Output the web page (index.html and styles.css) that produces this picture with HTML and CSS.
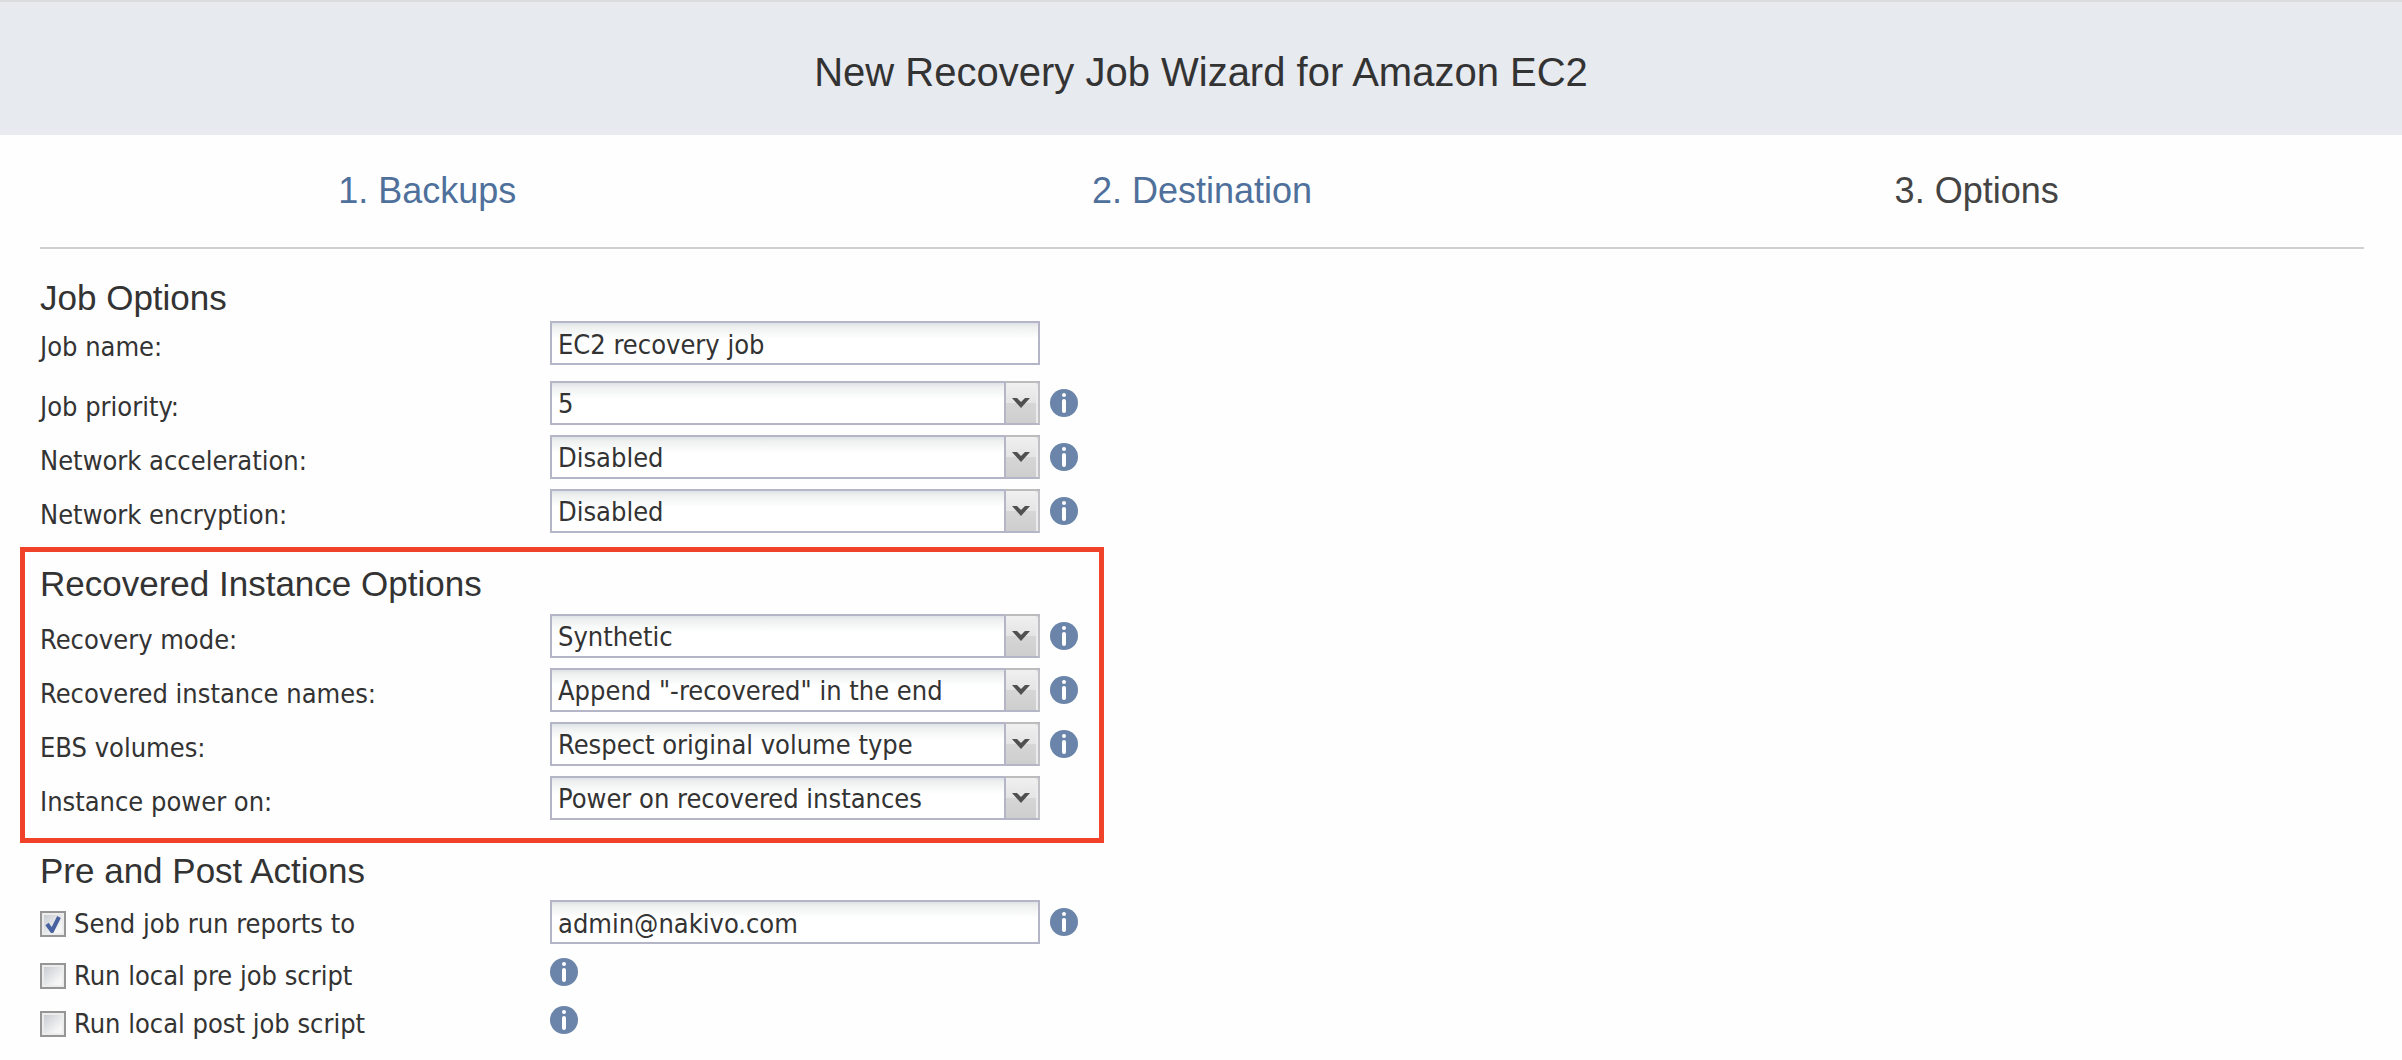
FILE: index.html
```html
<!DOCTYPE html>
<html lang="en">
<head>
<meta charset="utf-8">
<meta name="viewport" content="width=device-width, initial-scale=1">
<title>New Recovery Job Wizard for Amazon EC2</title>
<link rel="stylesheet" href="styles.css">
</head>
<body>
<svg class="sprite" aria-hidden="true">
  <symbol id="info" viewBox="0 0 28 28">
    <circle cx="14" cy="14" r="14" fill="#6a84aa"/>
    <circle cx="14" cy="6" r="2" fill="#fff"/>
    <rect x="12" y="10" width="4" height="14" rx="2" fill="#fff"/>
  </symbol>
  <symbol id="arrow" viewBox="0 0 18 12">
    <path d="M0 1h5l4 4 4-4h5l-9 10z" fill="#505050"/>
  </symbol>
  <symbol id="tick" viewBox="0 0 26 26">
    <path d="M7 13l5 7 7-14" fill="none" stroke="#48619f" stroke-width="4" stroke-linejoin="round"/>
  </symbol>
</svg>

<header class="header"><h1 class="title">New Recovery Job Wizard for Amazon EC2</h1></header>

<main class="wizard">
  <nav class="steps" aria-label="Wizard steps">
    <a class="step" href="#backups">1. Backups</a>
    <a class="step" href="#destination">2. Destination</a>
    <span class="step step-current" aria-current="step">3. Options</span>
  </nav>

  <form class="options">
    <section class="group group-job">
      <h2 class="heading">Job Options</h2>
      <div class="row row-name">
        <label class="label" for="job-name">Job name:</label>
        <input class="field" id="job-name" type="text" value="EC2 recovery job">
      </div>
      <div class="row">
        <label class="label" for="priority">Job priority:</label>
        <span class="combo"><select class="field" id="priority"><option>5</option></select><span class="trigger"><svg class="arrow"><use href="#arrow"/></svg></span></span>
        <button class="info" type="button" aria-label="About job priority"><svg class="info-icon"><use href="#info"/></svg></button>
      </div>
      <div class="row">
        <label class="label" for="acceleration">Network acceleration:</label>
        <span class="combo"><select class="field" id="acceleration"><option>Disabled</option></select><span class="trigger"><svg class="arrow"><use href="#arrow"/></svg></span></span>
        <button class="info" type="button" aria-label="About network acceleration"><svg class="info-icon"><use href="#info"/></svg></button>
      </div>
      <div class="row">
        <label class="label" for="encryption">Network encryption:</label>
        <span class="combo"><select class="field" id="encryption"><option>Disabled</option></select><span class="trigger"><svg class="arrow"><use href="#arrow"/></svg></span></span>
        <button class="info" type="button" aria-label="About network encryption"><svg class="info-icon"><use href="#info"/></svg></button>
      </div>
    </section>

    <section class="group group-marked">
      <h2 class="heading">Recovered Instance Options</h2>
      <div class="row">
        <label class="label" for="mode">Recovery mode:</label>
        <span class="combo"><select class="field" id="mode"><option>Synthetic</option></select><span class="trigger"><svg class="arrow"><use href="#arrow"/></svg></span></span>
        <button class="info" type="button" aria-label="About recovery mode"><svg class="info-icon"><use href="#info"/></svg></button>
      </div>
      <div class="row">
        <label class="label" for="names">Recovered instance names:</label>
        <span class="combo"><select class="field" id="names"><option>Append "-recovered" in the end</option></select><span class="trigger"><svg class="arrow"><use href="#arrow"/></svg></span></span>
        <button class="info" type="button" aria-label="About recovered instance names"><svg class="info-icon"><use href="#info"/></svg></button>
      </div>
      <div class="row">
        <label class="label" for="volumes">EBS volumes:</label>
        <span class="combo"><select class="field" id="volumes"><option>Respect original volume type</option></select><span class="trigger"><svg class="arrow"><use href="#arrow"/></svg></span></span>
        <button class="info" type="button" aria-label="About EBS volumes"><svg class="info-icon"><use href="#info"/></svg></button>
      </div>
      <div class="row">
        <label class="label" for="power">Instance power on:</label>
        <span class="combo"><select class="field" id="power"><option>Power on recovered instances</option></select><span class="trigger"><svg class="arrow"><use href="#arrow"/></svg></span></span>
      </div>
    </section>

    <section class="group group-actions">
      <h2 class="heading">Pre and Post Actions</h2>
      <div class="row row-reports">
        <label class="check"><span class="box"><input class="tickbox" type="checkbox" checked><svg class="tick"><use href="#tick"/></svg></span>Send job run reports to</label>
        <input class="field" type="email" aria-label="Report recipients" value="admin@nakivo.com">
        <button class="info" type="button" aria-label="About job run reports"><svg class="info-icon"><use href="#info"/></svg></button>
      </div>
      <div class="row row-script">
        <label class="check"><span class="box"><input class="tickbox" type="checkbox"><svg class="tick"><use href="#tick"/></svg></span>Run local pre job script</label>
        <button class="info" type="button" aria-label="About pre job script"><svg class="info-icon"><use href="#info"/></svg></button>
      </div>
      <div class="row row-script">
        <label class="check"><span class="box"><input class="tickbox" type="checkbox"><svg class="tick"><use href="#tick"/></svg></span>Run local post job script</label>
        <button class="info" type="button" aria-label="About post job script"><svg class="info-icon"><use href="#info"/></svg></button>
      </div>
    </section>
  </form>
</main>
</body>
</html>
```
FILE: styles.css
```css
* {
  box-sizing: border-box;
}

body {
  margin: 0;
  background: #fefefe;
  color: #333;
  font: 27px/34px "DejaVu Sans Condensed", Tahoma, "DejaVu Sans", sans-serif;
}

.sprite {
  display: none;
}

.header {
  padding: 46px 40px 39px;
  border-top: 2px solid #dadcde;
  background: #e7eaef;
  text-align: center;
}

.title,
.step,
.heading {
  margin: 0;
  font-family: "Liberation Sans", Arial, sans-serif;
  font-weight: 400;
}

.title {
  font-size: 40px;
  line-height: 48px;
}

.wizard {
  padding: 0 38px 16px 40px;
}

.steps {
  display: grid;
  grid-template-columns: repeat(3, 1fr);
  padding: 34px 0;
  border-bottom: 2px solid #d0d0d0;
}

.step {
  color: #4e709b;
  font-size: 36px;
  line-height: 44px;
  text-align: center;
  text-decoration: none;
}

.step-current {
  color: #444;
}

.options {
  padding-top: 29px;
}

.group {
  display: flex;
  flex-direction: column;
  gap: 10px;
}

.heading {
  font-size: 35px;
  line-height: 40px;
}

.group-job .heading {
  margin-bottom: -7px;
}

.row {
  display: grid;
  grid-template-columns: 510px 490px auto;
  justify-content: start;
  align-items: center;
}

.row-name {
  margin-bottom: 6px;
}

.label {
  padding-top: 8px;
}

.group-marked {
  width: 1084px;
  max-width: calc(100% + 20px);
  margin: 14px 0 8px -20px;
  padding: 12px 15px 18px;
  border: 5px solid #ef4228;
}

.field {
  width: 100%;
  height: 44px;
  margin: 0;
  padding: 2px 6px 0;
  border: 2px solid #b5b5c8;
  border-radius: 0;
  outline: 0;
  appearance: none;
  background: linear-gradient(#dfe3e6, #eef0f0 4px, #fff 16px);
  color: inherit;
  font: inherit;
}

.combo {
  display: grid;
}

.combo > * {
  grid-area: 1 / 1;
}

.trigger {
  display: flex;
  justify-content: center;
  justify-self: end;
  width: 36px;
  padding: 14px 2px 0 0;
  border: 2px solid #b5b5c8;
  border-top-color: #bcbcbc;
  border-right-color: #c2c2c6;
  border-top-right-radius: 4px;
  background: linear-gradient(#f0f0f0, #e4e4e4 50%, #d6d6d6 50%, #cecece);
  box-shadow: inset -2px 0 #ececec;
  pointer-events: none;
}

.arrow {
  width: 18px;
  height: 12px;
}

.info {
  width: 28px;
  height: 28px;
  margin-left: 10px;
  padding: 0;
  border: 0;
  background: none;
}

.info-icon {
  display: block;
  width: 28px;
  height: 28px;
}

.check {
  display: flex;
  align-items: center;
  gap: 8px;
  padding-top: 4px;
}

.box {
  display: grid;
}

.tickbox,
.tick {
  grid-area: 1 / 1;
  width: 26px;
  height: 26px;
  margin: 0;
}

.tickbox {
  padding: 2px;
  border: 2px solid #969696;
  appearance: none;
  background: linear-gradient(135deg, #c8ccd2, #f6f6f6 80%) content-box, #ececec;
}

.tick {
  visibility: hidden;
  pointer-events: none;
}

.tickbox:checked + .tick {
  visibility: visible;
}

.group-actions {
  gap: 0;
}

.row-reports {
  margin: 9px 0 4px;
}

.row-script {
  min-height: 48px;
}

.row-script .check {
  padding-top: 8px;
}

.row-script .info {
  margin-left: 0;
}
```
